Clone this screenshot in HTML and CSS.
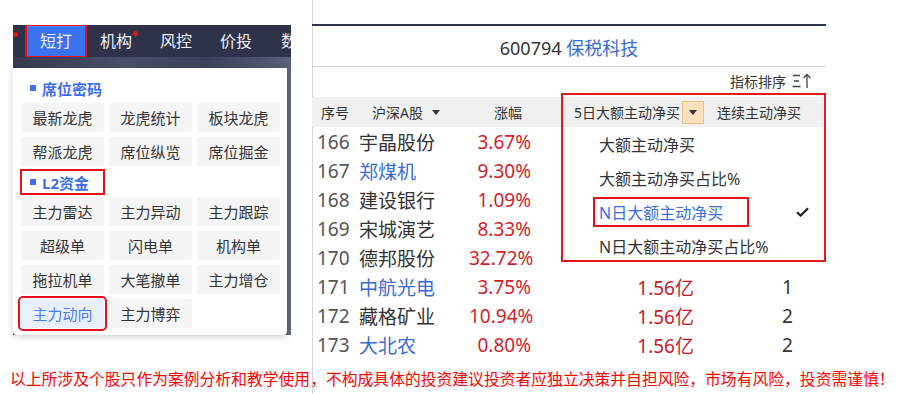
FILE: index.html
```html
<!DOCTYPE html>
<html lang="zh-CN">
<head>
  <meta charset="UTF-8" />
  <title>短打 - L2资金 - 主力动向</title>
  <link rel="stylesheet" href="styles.css">
</head>
<body>
  <div class="page">
    <!-- 左侧：菜单截图 -->
    <section class="shot-left">
      <nav class="tabs">
        <a class="tab active">短打</a>
        <a class="tab hot">机构</a>
        <a class="tab">风控</a>
        <a class="tab">价投</a>
        <a class="tab">数</a>
      </nav>
      <div class="strip"></div>
      <div class="backdrop">
        <div class="panel">
          <div class="group-title"><i></i>席位密码</div>
          <div class="btn-grid">
            <span class="item">最新龙虎</span>
            <span class="item">龙虎统计</span>
            <span class="item">板块龙虎</span>
            <span class="item">帮派龙虎</span>
            <span class="item">席位纵览</span>
            <span class="item">席位掘金</span>
          </div>
          <div class="group-title marked"><i></i>L2资金</div>
          <div class="btn-grid">
            <span class="item">主力雷达</span>
            <span class="item">主力异动</span>
            <span class="item">主力跟踪</span>
            <span class="item">超级单</span>
            <span class="item">闪电单</span>
            <span class="item">机构单</span>
            <span class="item">拖拉机单</span>
            <span class="item">大笔撤单</span>
            <span class="item">主力增仓</span>
            <span class="item selected">主力动向</span>
            <span class="item">主力博弈</span>
          </div>
        </div>
      </div>
    </section>

    <!-- 右侧：列表截图 -->
    <section class="shot-right">
      <div class="topline"></div>
      <div class="stock-title">600794 <span class="stock-name">保税科技</span></div>
      <div class="sortbar">
        指标排序
        <svg class="sort-icon" width="22" height="16" viewBox="0 0 22 16">
          <path d="M1 2.5h7M2 8h5M0.5 13.5h8" stroke="#444" stroke-width="1.3" fill="none"/>
          <path d="M15 15V1.5M11.5 5L15 1.5L18.5 5" stroke="#444" stroke-width="1.3" fill="none"/>
        </svg>
      </div>
      <div class="thead">
        <span class="c-no">序号</span>
        <span class="c-name">沪深A股<i class="caret"></i></span>
        <span class="c-pct">涨幅</span>
        <span class="c-val">5日大额主动净买<b class="drop-btn"><i class="caret"></i></b></span>
        <span class="c-cnt">连续主动净买</span>
      </div>
      <div class="tbody">
        <div class="row"><span class="c-no">166</span><span class="c-name">宇晶股份</span><span class="c-pct">3.67%</span><span class="c-val"></span><span class="c-cnt"></span></div>
        <div class="row"><span class="c-no">167</span><span class="c-name blue">郑煤机</span><span class="c-pct">9.30%</span><span class="c-val"></span><span class="c-cnt"></span></div>
        <div class="row"><span class="c-no">168</span><span class="c-name">建设银行</span><span class="c-pct">1.09%</span><span class="c-val"></span><span class="c-cnt"></span></div>
        <div class="row"><span class="c-no">169</span><span class="c-name">宋城演艺</span><span class="c-pct">8.33%</span><span class="c-val"></span><span class="c-cnt"></span></div>
        <div class="row"><span class="c-no">170</span><span class="c-name">德邦股份</span><span class="c-pct">32.72%</span><span class="c-val"></span><span class="c-cnt"></span></div>
        <div class="row"><span class="c-no">171</span><span class="c-name blue">中航光电</span><span class="c-pct">3.75%</span><span class="c-val">1.56亿</span><span class="c-cnt">1</span></div>
        <div class="row"><span class="c-no">172</span><span class="c-name">藏格矿业</span><span class="c-pct">10.94%</span><span class="c-val">1.56亿</span><span class="c-cnt">2</span></div>
        <div class="row"><span class="c-no">173</span><span class="c-name blue">大北农</span><span class="c-pct">0.80%</span><span class="c-val">1.56亿</span><span class="c-cnt">2</span></div>
      </div>

      <ul class="menu">
        <li>大额主动净买</li>
        <li>大额主动净买占比%</li>
        <li class="checked"><span class="marked-item">N日大额主动净买</span>
          <svg class="check" width="13" height="10" viewBox="0 0 13 10"><path d="M1 5.2L4.6 8.6L12 1.2" stroke="#222" stroke-width="2.2" fill="none"/></svg>
        </li>
        <li>N日大额主动净买占比%</li>
      </ul>
      <div class="mark-box"></div>
    </section>
  </div>

  <p class="disclaimer">以上所涉及个股只作为案例分析和教学使用，不构成具体的投资建议投资者应独立决策并自担风险，市场有风险，投资需谨慎！</p>
</body>
</html>
```

FILE: styles.css
```css
/* 基础 */
* {
  box-sizing: border-box;
  margin: 0; padding: 0;
}
body {
  font-family: "Noto Sans", "Noto Sans CJK SC", sans-serif;
  color: #333;
  background: #fff linear-gradient(#d6d6d6, #d6d6d6) no-repeat 312px 0 / 1px 100%;
  width: 910px;
  height: 394px;
  overflow: hidden;
}
.page {
  display: flex;
  align-items: flex-start;
  height: 368px;
}

/* 左侧菜单 */
.shot-left {
  width: 278px;
  margin: 25px 0 0 13px;
}
.tabs {
  display: flex;
  height: 32px;
  padding-left: 13px;
  background: #2f3349;
  overflow: hidden;
}
.tab {
  position: relative;
  flex: 0 0 60px;
  color: #eef0f6;
  font-size: 16px;
  line-height: 32px;
  text-align: center;
}
.tab:last-child {
  flex: 0 0 auto;
  padding-left: 15px;
  white-space: nowrap;
}
.tab.active {
  background: #3b72f0;
  box-shadow: inset 0 2px 0 #5a8cff;
  outline: 2px solid #e5101a;
  outline-offset: -1px;
}
.tab.active::before,
.tab.hot::after {
  content: "";
  position: absolute;
  top: 7px;
  width: 5px;
  height: 5px;
  border-radius: 50%;
  background: #e81418;
}
.tab.active::before { left: -13px; }
.tab.hot::after { right: 8px; top: 6px; }

.strip {
  height: 11px;
  background: linear-gradient(90deg, #353a52, #4a4f69 40%, #3c415a 70%, #5b6079);
}
.backdrop {
  background: #62677f;
}
.panel {
  width: 274px;
  padding: 7px 7px 7px 8px;
  background: #fff;
  border-radius: 0 0 4px 4px;
  box-shadow: 0 2px 6px rgba(0, 0, 0, 0.18);
}
.group-title {
  display: flex;
  align-items: center;
  width: fit-content;
  height: 26px;
  padding: 0 14px 0 8px;
  margin: 0 0 2px -1px;
  border: 2px solid transparent;
  color: #3d6ef0;
  font-size: 15px;
  font-weight: 700;
}
.group-title i {
  width: 6px;
  height: 6px;
  margin-right: 6px;
  background: #3d6ef0;
}
.group-title.marked {
  margin-top: 3px;
  border-color: #e5101a;
}
.btn-grid {
  display: grid;
  grid-template-columns: repeat(3, 83px);
  grid-auto-rows: 29px;
  gap: 5px;
}
.item {
  display: flex;
  align-items: center;
  justify-content: center;
  background: #f5f5f5;
  border-radius: 2px;
  font-size: 15px;
  color: #333;
}
.item.selected {
  background: #e8effd;
  color: #4a7cf0;
  outline: 2px solid #e5101a;
  outline-offset: 1px;
}

/* 右侧列表 */
.shot-right {
  position: relative;
  width: 514px;
  margin-left: 21px;
  padding-top: 24px;
}
.topline {
  height: 2px;
  background: #2f3450;
}
.stock-title {
  height: 41px;
  padding-top: 4px;
  border-bottom: 1px solid #d6d6d6;
  font-size: 18px;
  line-height: 36px;
  text-align: center;
  color: #333;
}
.stock-name { color: #3b6ad6; }
.sortbar {
  display: flex;
  align-items: center;
  justify-content: flex-end;
  gap: 6px;
  height: 30px;
  padding: 0 12px 2px 0;
  font-size: 14px;
}

.thead, .row {
  display: grid;
  grid-template-columns: 45px 112px 65px 177px 115px;
  align-items: center;
}
.thead {
  height: 30px;
  background: #f0f0f0;
  font-size: 14px;
}
.thead .c-no { padding-left: 9px; }
.thead .c-name { display: flex; align-items: center; padding-left: 15px; }
.thead .c-pct { text-align: right; padding-right: 12px; }
.thead .c-val { display: flex; align-items: center; padding-left: 40px; }
.thead .c-cnt { padding-left: 6px; }
.caret {
  width: 0;
  height: 0;
  margin-left: 9px;
  border: 4.5px solid transparent;
  border-top: 5px solid #333;
  border-bottom: 0;
}
.drop-btn {
  display: flex;
  align-items: center;
  justify-content: center;
  width: 22px;
  height: 23px;
  margin-left: 2px;
  background: #fbe1bd;
  border: 1px solid #e9c08c;
}
.drop-btn .caret { margin: 0; }

.row {
  height: 29px;
  font-size: 19px;
}
.row .c-no { padding-left: 5px; color: #555; }
.row .c-name { padding-left: 2px; color: #333; }
.row .c-name.blue { color: #3c6bd4; }
.row .c-pct { text-align: right; padding-right: 3px; color: #d21e2b; }
.row .c-val { text-align: right; padding-right: 17px; color: #c41e2a; }
.row .c-cnt { padding-left: 71px; color: #333; }

/* 下拉菜单 */
.menu {
  position: absolute;
  left: 251px;
  top: 127px;
  width: 261px;
  height: 133px;
  list-style: none;
  background: #fff;
}
.menu li {
  display: flex;
  align-items: center;
  height: 34px;
  padding: 0 15px 0 36px;
  font-size: 16px;
  color: #333;
}
.menu .checked { justify-content: space-between; }
.marked-item {
  margin-left: -6px;
  padding: 1px 24px 1px 4px;
  border: 2px solid #e5101a;
  color: #3d6ee0;
}
.mark-box {
  position: absolute;
  left: 249px;
  top: 93px;
  width: 265px;
  height: 169px;
  border: 2px solid #e3191c;
}

.disclaimer {
  padding-left: 10px;
  font-size: 15.8px;
  line-height: 22px;
  color: #ff0000;
  white-space: nowrap;
}
```
